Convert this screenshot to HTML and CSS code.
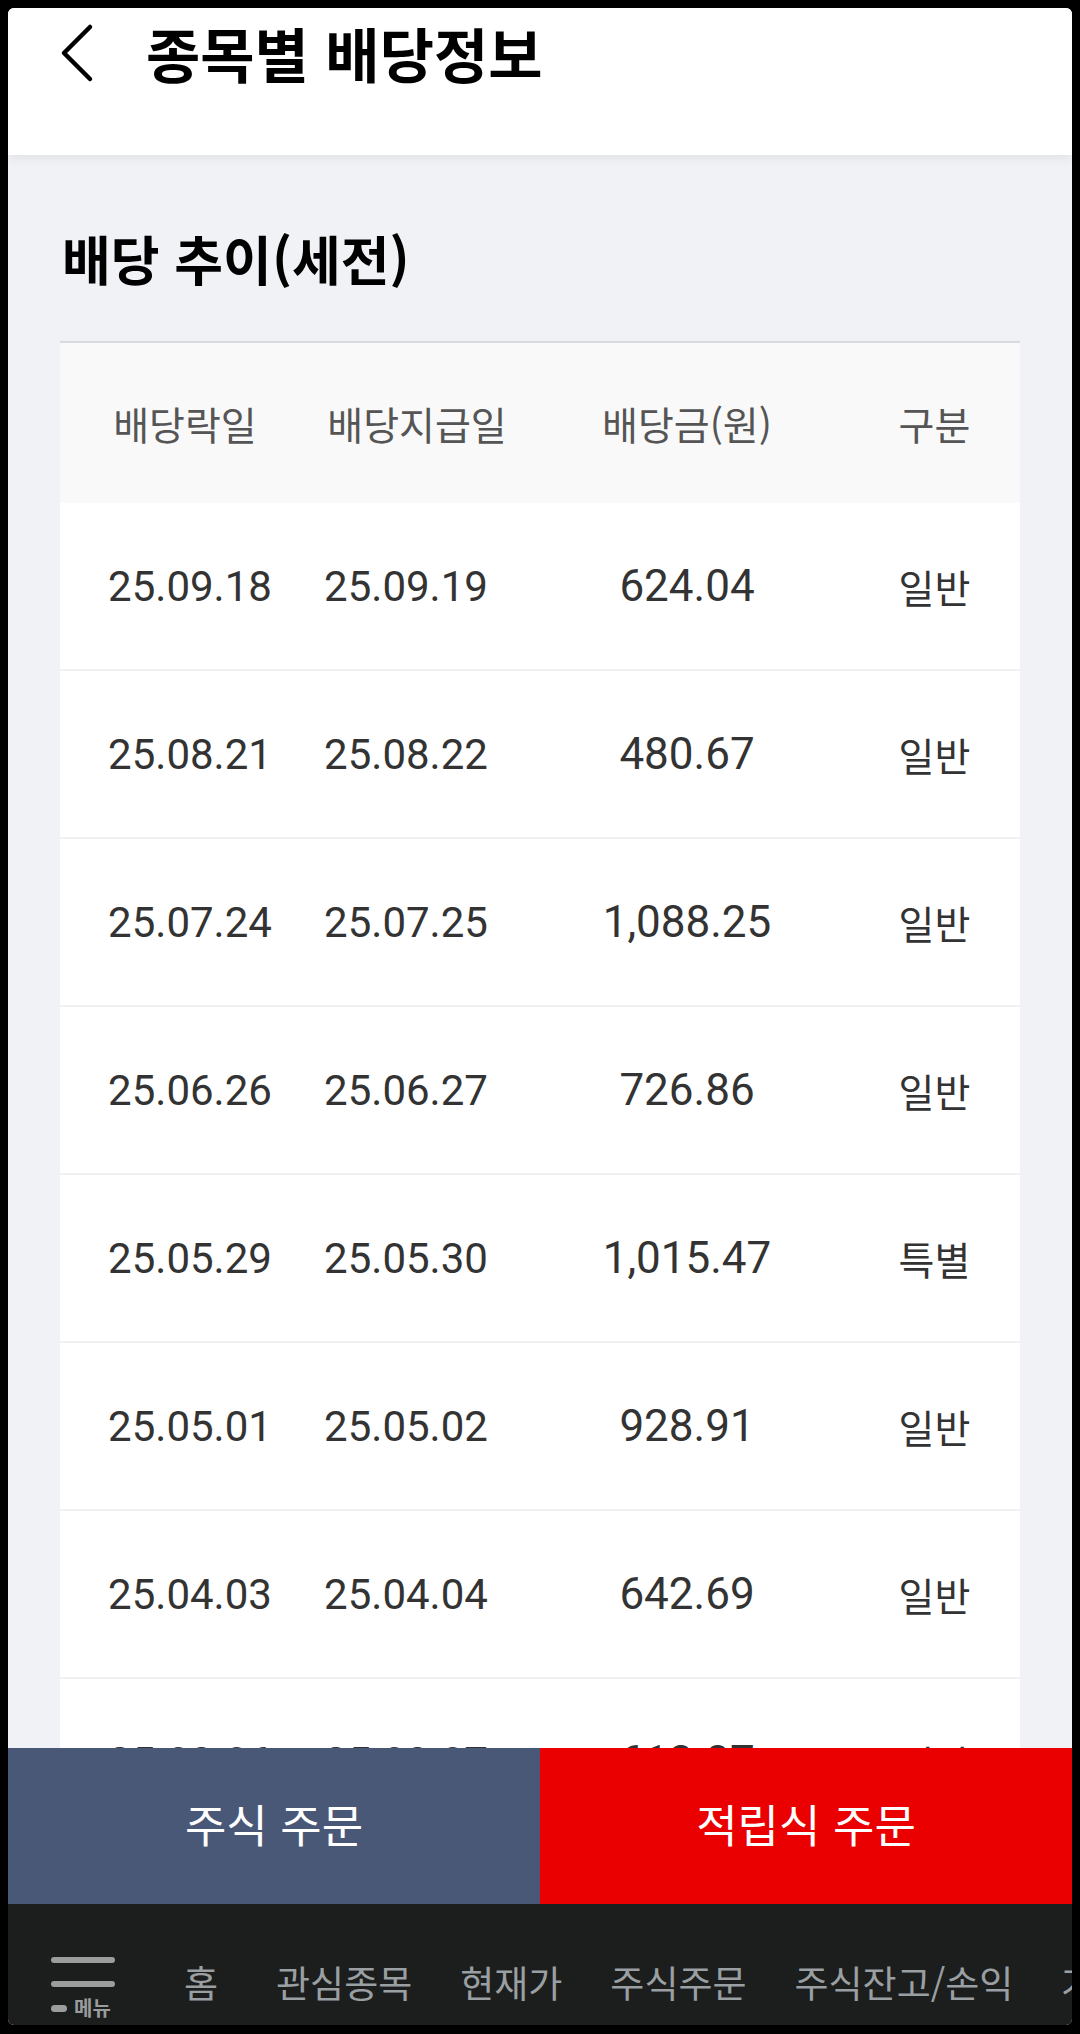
FILE: index.html
```html
<!DOCTYPE html>
<html lang="ko">
<head>
  <meta charset="UTF-8">
  <meta name="viewport" content="width=device-width, initial-scale=1.0">
  <title>종목별 배당정보</title>
  <link rel="stylesheet" href="styles.css">
</head>
<body>
  <div class="screen">
    <header class="top-bar">
      <button class="back-btn" aria-label="뒤로">
        <svg width="34" height="60" viewBox="0 0 34 60">
          <polyline points="30,4 4,30 30,56" fill="none" stroke="#000" stroke-width="4.5" stroke-linecap="round" stroke-linejoin="round"/>
        </svg>
      </button>
      <h1>종목별 배당정보</h1>
    </header>

    <main class="content">
      <h2 class="section-title">배당 추이(세전)</h2>

      <div class="div-table">
        <div class="row head">
          <span>배당락일</span>
          <span>배당지급일</span>
          <span>배당금(원)</span>
          <span>구분</span>
        </div>
        <div class="row">
          <span class="date">25.09.18</span>
          <span class="date">25.09.19</span>
          <span class="amount">624.04</span>
          <span class="kind">일반</span>
        </div>
        <div class="row">
          <span class="date">25.08.21</span>
          <span class="date">25.08.22</span>
          <span class="amount">480.67</span>
          <span class="kind">일반</span>
        </div>
        <div class="row">
          <span class="date">25.07.24</span>
          <span class="date">25.07.25</span>
          <span class="amount">1,088.25</span>
          <span class="kind">일반</span>
        </div>
        <div class="row">
          <span class="date">25.06.26</span>
          <span class="date">25.06.27</span>
          <span class="amount">726.86</span>
          <span class="kind">일반</span>
        </div>
        <div class="row">
          <span class="date">25.05.29</span>
          <span class="date">25.05.30</span>
          <span class="amount">1,015.47</span>
          <span class="kind">특별</span>
        </div>
        <div class="row">
          <span class="date">25.05.01</span>
          <span class="date">25.05.02</span>
          <span class="amount">928.91</span>
          <span class="kind">일반</span>
        </div>
        <div class="row">
          <span class="date">25.04.03</span>
          <span class="date">25.04.04</span>
          <span class="amount">642.69</span>
          <span class="kind">일반</span>
        </div>
        <div class="row">
          <span class="date">25.03.06</span>
          <span class="date">25.03.07</span>
          <span class="amount">613.87</span>
          <span class="kind">일반</span>
        </div>
      </div>
    </main>

    <div class="bottom">
      <div class="order-btns">
        <button class="order stock">주식 주문</button>
        <button class="order saving">적립식 주문</button>
      </div>
      <nav class="nav">
        <div class="menu-btn">
          <span class="line"></span>
          <span class="line"></span>
          <span class="menu-label"><i class="pill"></i>메뉴</span>
        </div>
        <ul class="nav-items">
          <li class="home">홈</li>
          <li>관심종목</li>
          <li>현재가</li>
          <li>주식주문</li>
          <li>주식잔고/손익</li>
          <li>거래내역</li>
        </ul>
      </nav>
    </div>
  </div>
</body>
</html>
```

FILE: styles.css
```css
body {
  margin: 0;
  background: #000;
  font-family: "Noto Sans CJK KR", "Noto Sans", sans-serif;
}

.screen {
  position: relative;
  width: 1064px;
  height: 2017px;
  margin: 8px 8px 0 8px;
  background: #f1f2f6;
  border-radius: 6px;
  overflow: hidden;
}

.top-bar {
  position: relative;
  height: 147px;
  background: #fff;
  display: flex;
  align-items: flex-start;
  box-shadow: 0 3px 10px rgba(0,0,0,0.07);
}

.back-btn {
  border: none;
  background: none;
  padding: 0;
  margin: 15px 0 0 52px;
  width: 34px;
  height: 60px;
}

.back-btn svg {
  display: block;
}

.top-bar h1 {
  margin: 0 0 0 52px;
  font-size: 59px;
  font-weight: 700;
  line-height: 90px;
  color: #000;
}

.content {
  padding: 0 52px;
}

.section-title {
  margin: 63px 0 43px 2px;
  font-size: 53px;
  font-weight: 700;
  line-height: 80px;
  color: #000;
}

.div-table {
  border-top: 2px solid #d8dadf;
  background: #fff;
}

.row {
  display: grid;
  grid-template-columns: 227px 238px 324px 1fr;
  align-items: center;
  height: 168px;
  border-bottom: 2px solid #eef0f2;
  box-sizing: border-box;
  text-align: center;
}

.row > span:first-child {
  padding-left: 33px;
}

.row.head {
  height: 160px;
  background: #f9f9fa;
  border-bottom: none;
  font-size: 39px;
  color: #555;
}

.row.head > span:first-child {
  padding-left: 23px;
}

.row.head > span:nth-child(2) {
  padding-left: 22px;
}

.date {
  font-family: Roboto, "Noto Sans CJK KR", sans-serif;
  font-size: 42px;
  color: #333;
}

.amount {
  font-family: Roboto, "Noto Sans CJK KR", sans-serif;
  font-size: 44px;
  color: #333;
}

.kind {
  font-size: 39px;
  color: #333;
}

.bottom {
  position: absolute;
  left: 0;
  right: 0;
  bottom: 0;
}

.order-btns {
  display: flex;
  height: 156px;
}

.order {
  flex: 1;
  border: none;
  margin: 0;
  font-family: "Noto Sans CJK KR", sans-serif;
  font-size: 45px;
  color: #fff;
  padding-bottom: 6px;
}

.order.stock {
  background: #4a5878;
}

.order.saving {
  background: #ea0000;
}

.nav {
  display: flex;
  height: 121px;
  background: #1c1e1e;
}

.menu-btn {
  flex: none;
  width: 135px;
  padding: 53px 0 0 43px;
  box-sizing: border-box;
  display: flex;
  flex-direction: column;
}

.menu-btn .line {
  display: block;
  width: 64px;
  height: 6px;
  border-radius: 3px;
  background: #9a9c9e;
  margin-bottom: 18px;
}

.menu-label {
  display: flex;
  align-items: center;
  margin-top: -7px;
  font-size: 20px;
  font-weight: 700;
  line-height: 20px;
  color: #9a9c9e;
}

.pill {
  display: inline-block;
  width: 16px;
  height: 7px;
  border-radius: 4px;
  background: #9a9c9e;
  margin-right: 7px;
}

.nav-items {
  display: flex;
  gap: 48px;
  margin: 0;
  padding: 54px 0 0 41px;
  list-style: none;
  white-space: nowrap;
  font-size: 37px;
  line-height: 48px;
  color: #9a9fa2;
}

.nav-items .home {
  margin-right: 10px;
}
```
